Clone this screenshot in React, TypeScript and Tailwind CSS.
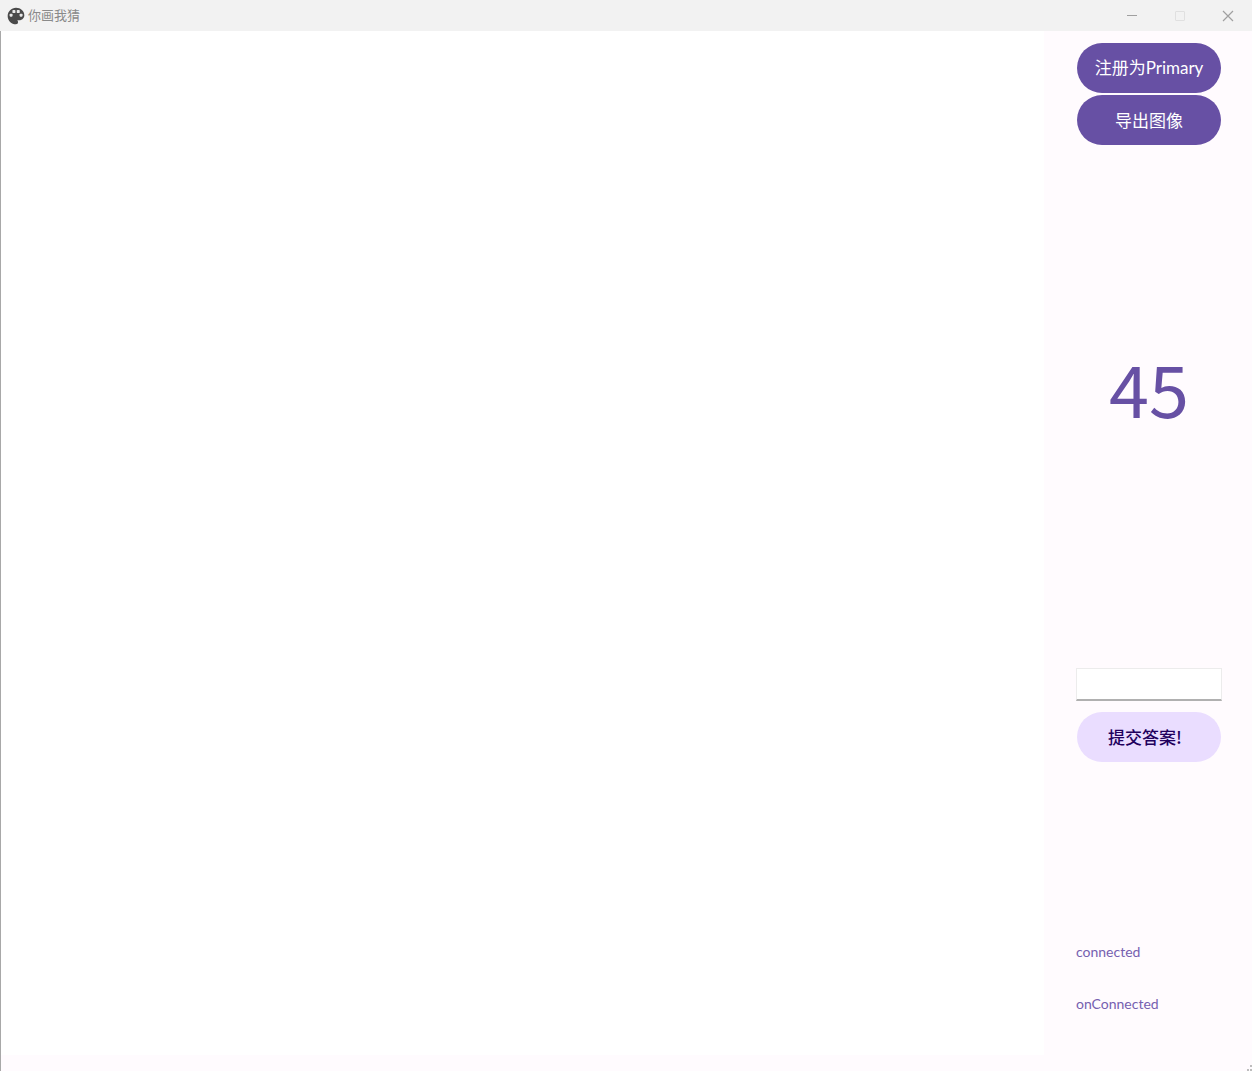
import React from "react";

function PaletteIcon() {
  return (
    <svg viewBox="0 0 24 24" className="size-5 text-[#4a4a4a]" aria-hidden="true">
      <path
        fill="currentColor"
        d="M12 2C6.490 2 2 6.490 2 12s4.490 10 10 10a2.500 2.500 0 0 0 2.500-2.500c0-.610-.230-1.200-.640-1.670a.530.530 0 0 1-.130-.330c0-.280.220-.500.500-.500H16c3.310 0 6-2.690 6-6 0-4.960-4.490-9-10-9z"
      />
      <g fill="#e8e8e8">
        <rect x="4.300" y="9.200" width="3.600" height="3.600" rx="1" />
        <rect x="7.700" y="4.800" width="3.600" height="3.600" rx="1" />
        <rect x="12.900" y="4.800" width="3.600" height="3.600" rx="1" />
        <rect x="16.300" y="9.200" width="3.600" height="3.600" rx="1" />
      </g>
    </svg>
  );
}

function TitleBar() {
  return (
    <header className="flex h-[31px] shrink-0 items-center justify-between bg-[#f2f2f2]">
      <div className="flex items-center gap-[2px] pl-[6px]">
        <PaletteIcon />
        <h1 className="pb-px text-[13px] leading-5 text-[#8a8a8a]">你画我猜</h1>
      </div>
      <div className="flex h-full text-[#a0a0a0]">
        <button type="button" aria-label="Minimize" className="grid h-full w-12 place-items-center">
          <svg viewBox="0 0 12 12" className="size-3" stroke="currentColor" fill="none">
            <path d="M1 5.500h10" />
          </svg>
        </button>
        <button type="button" aria-label="Maximize" disabled className="grid h-full w-12 place-items-center text-[#e0e0e0]">
          <svg viewBox="0 0 12 12" className="size-3" stroke="currentColor" fill="none">
            <rect x="1.500" y="1.500" width="9" height="9" rx="0.500" />
          </svg>
        </button>
        <button type="button" aria-label="Close" className="grid h-full w-12 place-items-center">
          <svg viewBox="0 0 12 12" className="size-3" stroke="currentColor" strokeWidth="1.200" fill="none">
            <path d="M1 1l10 10M11 1L1 11" />
          </svg>
        </button>
      </div>
    </header>
  );
}

const pill = "mx-px h-[50px] rounded-full text-[17px] leading-6";

function Sidebar() {
  return (
    <aside className="flex w-[208px] shrink-0 flex-col pt-3 pr-[30px] pb-[41px] pl-8 text-[#6750a4]">
      <div className="flex flex-col gap-[2px]">
        <button type="button" className={`${pill} bg-[#6750a4] font-['Lato','Noto_Sans_CJK_SC',sans-serif] text-white`}>
          注册为Primary
        </button>
        <button type="button" className={`${pill} bg-[#6750a4] text-white`}>导出图像</button>
      </div>
      <div className="flex grow-[16] basis-0 items-center justify-center">
        <output className="pb-10 text-[72px] leading-none">45</output>
      </div>
      <form className="flex flex-col gap-[11px]" onSubmit={(e) => e.preventDefault()}>
        <input
          type="text"
          aria-label="答案"
          className="h-[33px] w-full border border-[#ececec] border-b-2 border-b-[#b0b0b0] bg-white px-2 text-sm outline-none"
        />
        <button type="submit" className={`${pill} bg-[#eaddff] pr-2 font-medium text-[#21005d]`}>提交答案!</button>
      </form>
      <div className="grow-[5] basis-0" />
      <div className="font-['Lato','Noto_Sans_CJK_SC',sans-serif] text-sm text-[#7660b0]">
        <p className="flex h-[52px] items-center">connected</p>
        <p className="flex h-[52px] items-center">onConnected</p>
      </div>
    </aside>
  );
}

function ResizeGrip() {
  return (
    <svg viewBox="0 0 6 6" className="absolute right-0 bottom-0 size-[6px]" fill="#bdbdbd" aria-hidden="true">
      <path d="M4 0h2v2H4zM1 4h2v2H1zM4 4h2v2H4z" />
    </svg>
  );
}

export default function App() {
  return (
    <div className="relative flex h-screen flex-col bg-[#fffbfe] font-['Noto_Sans_CJK_SC',sans-serif]">
      <TitleBar />
      <main className="flex min-h-0 flex-1 border-l border-[#a8a8a8]">
        <div className="min-w-0 flex-1 pb-4">
          <canvas aria-label="画布" className="block h-full w-full bg-white" />
        </div>
        <Sidebar />
      </main>
      <ResizeGrip />
    </div>
  );
}
